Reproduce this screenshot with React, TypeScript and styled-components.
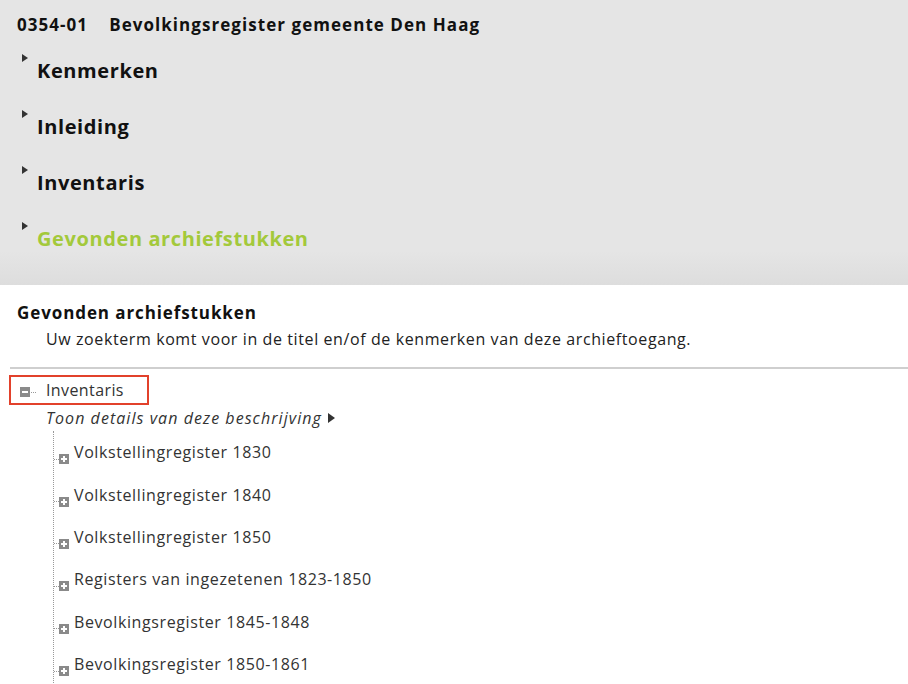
import { createGlobalStyle, styled } from 'styled-components';

const GlobalStyle = createGlobalStyle`
  html, body {
    margin: 0;
    padding: 0;
    background: #fff;
  }
  body {
    font-family: "Open Sans", "Noto Sans", sans-serif;
    color: #222;
  }
`;

interface SectionProps {
  label: string,
  active?: boolean
}

const Header = styled.header`
  background: linear-gradient(to bottom, #e5e5e5 0%, #e5e5e5 88%, #dddddd 100%);
  height: 285px;
  box-sizing: border-box;
  padding: 11px 0 0 17px;
`;

const ArchiveTitle = styled.h1`
  margin: 0;
  font-size: 17px;
  font-weight: 700;
  line-height: 28px;
  letter-spacing: 1.05px;
  color: #111;
  display: flex;
  gap: 21px;
`;

const SectionList = styled.ul`
  list-style: none;
  margin: 0;
  padding: 0;
`;

const SectionItem = styled.li`
  display: flex;
  align-items: flex-start;
  height: 56px;
`;

const Triangle = styled.span`
  width: 0;
  height: 0;
  margin: 15px 9px 0 5px;
  border-top: 4px solid transparent;
  border-bottom: 4px solid transparent;
  border-left: 6px solid #333;
`;

const SectionLabel = styled.span<{ $active?: boolean }>`
  margin-top: 18px;
  font-size: 20px;
  font-weight: 700;
  line-height: 28px;
  letter-spacing: 0.6px;
  color: ${p => p.$active ? '#a3c93b' : '#111'};
`;

function Section({ label, active }: SectionProps) {
  return (
    <SectionItem>
      <Triangle />
      <SectionLabel $active={active}>{label}</SectionLabel>
    </SectionItem>
  );
}

const Main = styled.main`
  padding: 14px 0 0 0;
`;

const ResultHeading = styled.h2`
  margin: 0 0 0 17px;
  font-size: 17px;
  font-weight: 700;
  line-height: 27px;
  letter-spacing: 0.9px;
  color: #111;
`;

const Intro = styled.p`
  margin: 0 0 0 46px;
  font-size: 16px;
  line-height: 27px;
  letter-spacing: 0.6px;
  color: #222;
`;

const Divider = styled.hr`
  margin: 14px 0 0 10px;
  border: 0;
  border-top: 2px solid #cfcfcf;
`;

const TreeRoot = styled.div`
  padding: 6px 0 0 9px;
`;

const RootRow = styled.div`
  display: inline-flex;
  align-items: center;
  border: 2px solid #e2412b;
  height: 26px;
  padding: 0 23px 0 9px;
  font-size: 16px;
  letter-spacing: 0.4px;
  color: #333;
`;

const NodeIcon = styled.span`
  display: inline-flex;
  align-items: center;
  justify-content: center;
  flex: none;
  width: 10px;
  height: 10px;
  background: #8a8a8a;
  position: relative;
`;

const MinusIcon = styled(NodeIcon)`
  margin-top: 4px;
  &::before {
    content: "";
    width: 6px;
    height: 2px;
    background: #fff;
  }
`;

const Connector = styled.span`
  width: 5px;
  border-top: 1px dotted #999;
  margin: 4px 10px 0 1px;
`;

const DetailsLink = styled.a`
  display: flex;
  align-items: center;
  gap: 6px;
  margin: 0 0 0 46px;
  font-size: 16px;
  font-style: italic;
  line-height: 26px;
  letter-spacing: 1.05px;
  color: #333;
  text-decoration: none;
`;

const SmallTriangle = styled.span`
  width: 0;
  height: 0;
  border-top: 5px solid transparent;
  border-bottom: 5px solid transparent;
  border-left: 7px solid #333;
`;

const Children = styled.ul`
  list-style: none;
  margin: 0 0 0 53px;
  padding: 0;
  border-left: 1px dotted #999;
`;

const ChildItem = styled.li`
  display: flex;
  align-items: center;
  height: 42.4px;
  font-size: 16px;
  letter-spacing: 0.6px;
  color: #333;
`;

const ChildBranch = styled.span`
  display: flex;
  align-items: center;
  margin-top: 14px;
`;

const ChildDots = styled.span`
  width: 5px;
  border-top: 1px dotted #999;
`;

const PlusIcon = styled(NodeIcon)`
  &::before, &::after {
    content: "";
    position: absolute;
    background: #fff;
  }
  &::before { width: 6px; height: 2px; }
  &::after { width: 2px; height: 6px; }
`;

const ChildLabel = styled.span`
  line-height: 26px;
  margin-left: 5px;
  white-space: nowrap;
`;

const children = [
  'Volkstellingregister 1830',
  'Volkstellingregister 1840',
  'Volkstellingregister 1850',
  'Registers van ingezetenen 1823-1850',
  'Bevolkingsregister 1845-1848',
  'Bevolkingsregister 1850-1861',
];

export default function App() {
  return (
    <>
      <GlobalStyle />
      <Header>
        <ArchiveTitle>
          <span>0354-01</span>
          <span>Bevolkingsregister gemeente Den Haag</span>
        </ArchiveTitle>
        <SectionList>
          <Section label="Kenmerken" />
          <Section label="Inleiding" />
          <Section label="Inventaris" />
          <Section label="Gevonden archiefstukken" active />
        </SectionList>
      </Header>
      <Main>
        <ResultHeading>Gevonden archiefstukken</ResultHeading>
        <Intro>Uw zoekterm komt voor in de titel en/of de kenmerken van deze archieftoegang.</Intro>
        <Divider />
        <TreeRoot>
          <RootRow>
            <MinusIcon />
            <Connector />
            Inventaris
          </RootRow>
        </TreeRoot>
        <DetailsLink href="#">
          Toon details van deze beschrijving
          <SmallTriangle />
        </DetailsLink>
        <Children>
          {children.map(c => (
            <ChildItem key={c}>
              <ChildBranch>
                <ChildDots />
                <PlusIcon />
              </ChildBranch>
              <ChildLabel>{c}</ChildLabel>
            </ChildItem>
          ))}
        </Children>
      </Main>
    </>
  );
}
